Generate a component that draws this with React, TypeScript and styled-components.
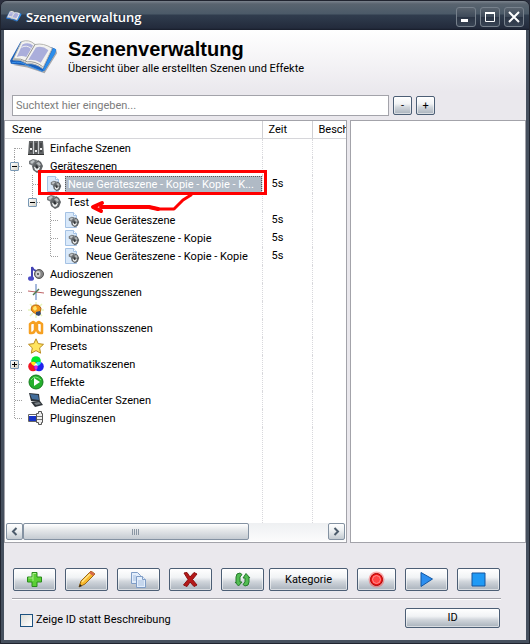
import React from "react";
import styled, { createGlobalStyle } from "styled-components";

const GlobalStyle = createGlobalStyle`
  * { box-sizing: border-box; }
  html, body, #root { height: 100%; margin: 0; }
  body { font: 11px/18px Roboto, "Liberation Sans", sans-serif; color: #000; background: #2c303f; }
  button, input { font: inherit; color: inherit; }
`;

const Window = styled.main`
  min-height: 100vh;
  display: flex;
  flex-direction: column;
  border: 1px solid #20242f;
  border-radius: 7px 7px 0 0;
  background: #46505e;
  padding: 0 3px 3px;
  overflow: hidden;
`;
const TitleBar = styled.header`
  height: 29px;
  margin: 0 -3px;
  padding: 2px 5px 0;
  display: flex;
  align-items: center;
  gap: 4px;
  color: #fff;
  font: 600 13px "Open Sans", sans-serif;
  background: linear-gradient(#7b838d 0, #59646f 3px, #4b5a68 13px, #303d4e 14px, #232b3c 27px, #171c2a 29px);
`;
const TitleText = styled.span` flex: 1; `;
const CaptionButton = styled.button`
  width: 20px;
  height: 20px;
  padding: 0;
  display: grid;
  place-items: center;
  border: 1px solid #77818c;
  border-radius: 3px;
  background: linear-gradient(#59636e, #3e4a59 48%, #2b3545 52%, #394454);
`;
const Body = styled.div`
  flex: 1;
  display: flex;
  flex-direction: column;
  background: linear-gradient(#fff, #eae8ed 62px);
`;
const Heading = styled.div`
  display: flex;
  align-items: flex-start;
  gap: 10px;
  padding: 8px 6px 0;
  height: 65px;
`;
const H1 = styled.h1` margin: 0; font: bold 20px/22px "Liberation Sans", Arial, sans-serif; `;
const Subtitle = styled.p` margin: 0; line-height: 18px; `;
const SearchRow = styled.div` display: flex; align-items: center; gap: 4px; padding: 0 91px 0 8px; height: 21px; `;
const Search = styled.input`
  flex: 1;
  min-width: 0;
  height: 21px;
  padding: 0 3px;
  border: 1px solid #a3a3aa;
  background: #fff;
  &::placeholder { color: #7d7d7d; opacity: 1; }
`;
const PushButton = styled.button<{ $w: number; $h: number }>`
  width: ${(p) => p.$w}px;
  height: ${(p) => p.$h}px;
  flex: none;
  padding: 0;
  display: grid;
  place-items: center;
  border: 1px solid #4c5e75;
  border-radius: 2px;
  background: linear-gradient(#fff, #f1f3f5 40%, #d0d5db 60%, #a9b2bc);
  box-shadow: inset 0 0 0 1px #ffffff88;
`;
const Panels = styled.div`
  flex: 1;
  margin-top: 4px;
  display: grid;
  grid-template-columns: 343fr 176fr;
  gap: 3px;
`;
const Panel = styled.section`
  position: relative;
  min-width: 0;
  display: flex;
  flex-direction: column;
  border: 1px solid #a3a3aa;
  background: #fff;
  overflow: hidden;
`;
const Tree = styled.table`
  width: 100%;
  table-layout: fixed;
  border-collapse: collapse;
  th { height: 17px; padding: 0 0 0 6px; text-align: left; font-weight: normal; line-height: 17px; white-space: nowrap; overflow: hidden; border-bottom: 1px solid #d6d6da; }
  th:first-child { padding-left: 7px; }
  th + th { border-left: 1px solid #d0d0d4; }
  td { height: 18px; padding: 0; }
  td + td { padding-left: 9px; border-left: 1px dotted #d8d8dc; }
`;
const Filler = styled.div`
  flex: 1;
  display: grid;
  grid-template-columns: 257px 50px 1fr;
  div + div { border-left: 1px dotted #d8d8dc; }
`;
const Row = styled.div` display: flex; align-items: center; height: 18px; padding-left: 0; `;
const Guide = styled.span<{ $v: "none" | "full" | "top" | "bottom"; $h: boolean }>`
  flex: none;
  width: 18px;
  height: 18px;
  display: grid;
  place-items: center;
  background-repeat: no-repeat;
  background-image:
    ${(p) => (p.$v === "none" ? "none" : "repeating-linear-gradient(#a0a0a0 0 1px, transparent 1px 2px)")},
    ${(p) => (p.$h ? "repeating-linear-gradient(90deg, #a0a0a0 0 1px, transparent 1px 2px)" : "none")};
  background-size: 1px ${(p) => (p.$v === "full" ? 18 : 9)}px, 9px 1px;
  background-position: 9px ${(p) => (p.$v === "bottom" ? 9 : 0)}px, 10px 9px;
`;
const Expander = styled.button`
  width: 9px;
  height: 9px;
  margin: 1px 0 0 1px;
  padding: 0;
  display: grid;
  border: 1px solid #7898b5;
  border-radius: 1px;
  background: linear-gradient(135deg, #fff, #d4d0c4);
`;
const IconSlot = styled.span` flex: none; width: 16px; height: 16px; margin: 0 3px 0 5px; display: block; svg { display: block; } `;
const Label = styled.span<{ $selected?: boolean }>`
  min-width: 0;
  flex: ${(p) => (p.$selected ? "1" : "none")};
  height: 17px;
  line-height: 17px;
  padding: 0 0 0 3px;
  white-space: nowrap;
  color: ${(p) => (p.$selected ? "#fff" : "inherit")};
  background: ${(p) => (p.$selected ? "#b0bac5" : "none")};
  outline: ${(p) => (p.$selected ? "1px dotted #5a5a5a" : "none")};
  outline-offset: -1px;
`;
const ScrollBar = styled.div` height: 18px; margin: 0 1px 1px; display: flex; background: linear-gradient(#eef0f2, #fbfbfc); `;
const ScrollButton = styled.button`
  width: 17px;
  height: 17px;
  padding: 0;
  display: grid;
  place-items: center;
  border: 1px solid #8492a2;
  border-radius: 2px;
  background: linear-gradient(#fff, #eceff1 45%, #c3cad1);
`;
const Thumb = styled.div`
  width: 226px;
  height: 17px;
  display: grid;
  place-items: center;
  border: 1px solid #8492a2;
  border-radius: 2px;
  background: linear-gradient(#fff, #e5e8ea 40%, #c5cbd2);
`;
const Space = styled.div` flex: 1; `;
const Toolbar = styled.div`
  display: flex;
  margin: 25px 25px 0 8px;
  padding: 0 1px 7px;
  border-bottom: 1px solid #a3a3aa;
  box-shadow: 0 1px #fff;
`;
const Group = styled.div` display: flex; gap: 9px; & + & { margin-left: 5px; } `;
const Footer = styled.footer` display: flex; justify-content: space-between; height: 41px; padding: 9px 26px 0 16px; `;
const CheckLabel = styled.label` display: flex; align-items: center; gap: 3px; height: 24px; font-size: 11px; `;
const Check = styled.input`
  appearance: none;
  width: 13px;
  height: 13px;
  margin: 0;
  border: 1px solid #1c5180;
  background: linear-gradient(135deg, #dcdcd7, #fff);
  &:checked { background: #1c5180; }
`;
const Markup = styled.svg` position: absolute; left: 0; top: 0; pointer-events: none; `;

const Book = ({ w, h }: { w: number; h: number }) => (
  <svg width={w} height={h} viewBox="0 0 50 38">
    <path d="M2 27 18 30 36 36 49 15 48 11 30 25Z" fill="#454b55" opacity=".45" />
    <path d="M0 23 11 3 14 3 44 9 48 11 47 15 36 33 33 34 20 28 1 26Z" fill="#1b62bd" />
    <path d="M45 10 48 11 47 15 36 33 34 33Z" fill="#2b8deb" />
    <path d="M2 25Q12 23 18 28L34 34" fill="none" stroke="#3c94ec" />
    <path d="M3 22 12 3Q20 0 26 6Q35 4 44 10L34 31Q26 25 18 26Q11 21 3 22Z" fill="#f2f2f0" stroke="#b5b5b0" />
    <path d="M4 21Q11 20 18 24Q26 23 34 29" fill="none" stroke="#92928c" />
    <path d="M26 6 16 23" stroke="#8e8e88" />
    <path d="M13 6Q19 3 24 7L17 19Q12 17 7 19Z" fill="#aaaedb" />
    <path d="M12 9Q17 6 22 10" stroke="#f2f2f0" fill="none" />
    <path d="M27 9Q34 7 40 12L32 25Q26 21 19 22Z" fill="#aaaedb" />
  </svg>
);

const Gripper = () => (
  <g>
    <path d="M1 3 5 1 9 2 8 6 5 8 1 6Z" fill="#75797c" />
    <path d="M2 4 5 2 7 3 4 6Z" fill="#bfc3c6" />
    <path d="M10 2 13 4 15 8 13 13 9 15 5 12 4 8 7 5Z" fill="#606467" />
    <path d="M8 5 11 4 13 7 11 8Z" fill="#b4b8ba" />
    <path d="M6 9 9 8 12 9 11 12 9 13 7 12Z" fill="#eceeee" />
    <path d="M8 7 11 9 9 11 7 9Z" fill="#303336" />
  </g>
);

const glyphs: Record<string, React.ReactNode> = {
  mixer: (
    <g>
      <path d="M1 1h14l1 14H0z" fill="#606365" />
      <path d="M5.500 1v14M10.500 1v14" stroke="#c5c8ca" />
      <path d="M3 3v9M8 3v9M13 3v9" stroke="#2c2e30" />
      <path d="M2 9h2M7 11h2M12 9h2" stroke="#eee" strokeWidth="2" />
      <path d="M0 14.500h16" stroke="#333" />
    </g>
  ),
  device: <Gripper />,
  file: (
    <g>
      <path d="M1.500.5h8l3 3v12h-11z" fill="#d9e9fa" stroke="#a5c2e4" />
      <path d="M9.500.5v3h3" fill="#fff" stroke="#a5c2e4" />
      <g transform="translate(4 4) scale(.75)"><Gripper /></g>
    </g>
  ),
  audio: (
    <g>
      <path d="M4 12V1Q5 4 8 5" stroke="#4343b4" strokeWidth="2" fill="none" />
      <ellipse cx="3" cy="12.500" rx="3" ry="2.300" fill="#4b4bc3" />
      <circle cx="11" cy="8" r="4.500" fill="#858585" stroke="#555" />
      <ellipse cx="10" cy="8" rx="2.500" ry="3" fill="#d2d2d2" />
      <circle cx="10" cy="8" r="1" fill="#444" />
    </g>
  ),
  axes: (
    <g fill="none">
      <path d="M8 0v16" stroke="#a5b9dc" strokeWidth="2" />
      <path d="M0 7 16 9" stroke="#bd6265" />
      <path d="M5 11 11 5" stroke="#50784f" strokeWidth="1.500" />
    </g>
  ),
  bulb: (
    <g>
      <path d="M2 2 14 14M14 2 2 14M8 0v16M0 8h16" stroke="#e8f5bd" strokeWidth="1.500" />
      <path d="M7 3C3 3 2 8 5 10L8 12 12 11 13 6Q11 2 7 3" fill="#f59a17" stroke="#b96a16" />
      <path d="M5 7Q5 4 8 4L9 7 7 9Z" fill="#ffe66b" />
      <path d="m8 10 4-1 1 3-2 2-3-1z" fill="#35496a" />
    </g>
  ),
  combi: (
    <g fill="none" stroke="#f6a021" strokeWidth="2.500" strokeLinejoin="round">
      <path d="M2 4 5 2Q8 3 7 6V10Q6 13 4 13H2Z" />
      <path d="M14 4 11 2Q8 3 9 6V10Q10 13 12 13H14Z" />
      <path d="M7 8h2" />
    </g>
  ),
  star: <path d="m8 .8 2.200 4.800 5.300.7-3.900 3.600 1 5.300L8 12.600l-4.700 2.600 1-5.300L.5 6.300l5.300-.7z" fill="#ffe45e" stroke="#b98a22" />,
  rgb: (
    <g>
      <circle cx="8" cy="5" r="4.800" fill="#00e52f" />
      <circle cx="5" cy="10.500" r="4.800" fill="#f01523" />
      <circle cx="11" cy="10.500" r="4.800" fill="#2023ed" />
      <path d="M3 6.200Q6 5 8 7L7 10Q3 9 3 6.200" fill="#ffee20" />
      <path d="M13 6.200Q10 5 8 7L9 10Q13 9 13 6.200" fill="#20e8ee" />
      <path d="M6.500 9.500h3Q10 13 8 14Q6 13 6.500 9.500" fill="#e320e5" />
      <path d="M8 7 10 9.500H6Z" fill="#fff" />
    </g>
  ),
  play: (
    <g>
      <circle cx="8" cy="8" r="7" fill="#25af2c" stroke="#147b1c" />
      <path d="M3 6Q7 0 13 6" fill="none" stroke="#7fe27e" />
      <path d="m6 4 6 4-6 4z" fill="#fff" />
    </g>
  ),
  laptop: (
    <g>
      <path d="m1 1 10 1 1 8-9-1z" fill="#2c3238" />
      <path d="m2 2 8 1 1 5-7-1z" fill="#426d9b" />
      <path d="m3 10 9-1 3 4-8 2z" fill="#2e3338" />
      <path d="m6 11 5-1 2 2-5 1z" fill="#777e84" />
    </g>
  ),
  plugin: (
    <g>
      <path d="M.5 4.500h10v7H.5z" fill="#fff" stroke="#666" />
      <path d="M1 6h7v5H1z" fill="#1733c8" />
      <path d="M10.500 1.500h3v2h1v9h-1v2h-3v-2h-2v-9h2z" fill="#eee" stroke="#555" />
      <path d="M9 6.500h5M9 9.500h5" stroke="#777" />
    </g>
  ),
};

type Item = { label: string; icon: string; level: number; time?: string; toggle?: "+" | "-"; selected?: boolean; last?: boolean };
const items: Item[] = [
  { label: "Einfache Szenen", icon: "mixer", level: 0 },
  { label: "Geräteszenen", icon: "device", level: 0, toggle: "-" },
  { label: "Neue Geräteszene - Kopie - Kopie - K...", icon: "file", level: 1, time: "5s", selected: true },
  { label: "Test", icon: "device", level: 1, toggle: "-", last: true },
  { label: "Neue Geräteszene", icon: "file", level: 2, time: "5s" },
  { label: "Neue Geräteszene - Kopie", icon: "file", level: 2, time: "5s" },
  { label: "Neue Geräteszene - Kopie - Kopie", icon: "file", level: 2, time: "5s", last: true },
  { label: "Audioszenen", icon: "audio", level: 0 },
  { label: "Bewegungsszenen", icon: "axes", level: 0 },
  { label: "Befehle", icon: "bulb", level: 0 },
  { label: "Kombinationsszenen", icon: "combi", level: 0 },
  { label: "Presets", icon: "star", level: 0 },
  { label: "Automatikszenen", icon: "rgb", level: 0, toggle: "+" },
  { label: "Effekte", icon: "play", level: 0 },
  { label: "MediaCenter Szenen", icon: "laptop", level: 0 },
  { label: "Pluginszenen", icon: "plugin", level: 0, last: true },
];

const TreeRow = ({ item, first }: { item: Item; first: boolean }) => (
  <tr aria-selected={item.selected}>
    <td>
      <Row>
        {Array.from({ length: item.level + 1 }, (_, i) => {
          const own = i === item.level;
          const v = own ? (first ? "bottom" : item.last ? "top" : "full") : i === 0 ? "full" : "none";
          return (
            <Guide key={i} $v={v} $h={own}>
              {own && item.toggle && (
                <Expander aria-label={`${item.label} ${item.toggle === "-" ? "zuklappen" : "aufklappen"}`}>
                  <svg width="7" height="7"><path d={item.toggle === "-" ? "M1 3.500h5" : "M1 3.500h5M3.500 1v5"} stroke="#000" /></svg>
                </Expander>
              )}
            </Guide>
          );
        })}
        <IconSlot><svg width="16" height="16" viewBox="0 0 16 16">{glyphs[item.icon]}</svg></IconSlot>
        <Label $selected={item.selected}>{item.label}</Label>
      </Row>
    </td>
    <td>{item.time}</td>
    <td />
  </tr>
);

const tools: Record<string, React.ReactNode> = {
  add: (
    <g>
      <path d="M6 1.500h5v4.500h4.500v5H11v4.500H6V11H1.500V6H6z" fill="#5bcf35" stroke="#2b8a1d" />
      <path d="M7 10V2.500h3M2.500 7H7" fill="none" stroke="#a9ee8b" />
    </g>
  ),
  edit: (
    <g>
      <path d="M1 16 3 10 13 0 17 3 7 13Z" fill="#f8b92d" stroke="#9a6717" />
      <path d="M4 11 13 2" stroke="#ffe58a" strokeWidth="1.500" />
      <path d="m13 0 4 3-2 2-4-3z" fill="#d66a4b" />
      <path d="m1 16 1-3 2 2z" fill="#222" />
    </g>
  ),
  copy: (
    <g fill="#e3eefb" stroke="#7f9dc6">
      <path d="M1.500 1.500h6l3 3v8h-9z" />
      <path d="M3 5h3M3 7h3M3 9h3" stroke="#a7bfdf" />
      <path d="M6.500 5.500h6l3 3v8h-9z" />
      <path d="M12.500 5.500v3h3" />
      <path d="M8 10h6M8 12h6M8 14h6" stroke="#a7bfdf" />
    </g>
  ),
  remove: <path d="M2 2 5 1.500 8 6 12 1.500 15 3 10.500 8.500 15 14 12 15.500 8 11 5 15.500 1.500 14 6 8.500Z" fill="#b51919" stroke="#8a1010" />,
  refresh: (
    <g fill="#52bd52" stroke="#267a2d">
      <path d="M2 12V6Q2 2 6 2L8 3.500 6 6V11H8L4.500 15 1 11Z" />
      <path d="M15 6v5Q15 15 11 15L9 13.500 11 11V7H9L12 2.500 16 7Z" />
    </g>
  ),
  record: (
    <g>
      <circle cx="8.500" cy="8.500" r="8" fill="#ff4d4d" opacity=".45" />
      <circle cx="8.500" cy="8.500" r="6" fill="#f51717" stroke="#a90505" />
      <circle cx="8.500" cy="8.500" r="4" fill="#ff4545" stroke="#ff9292" />
    </g>
  ),
  play: <path d="M3 1.500 14.500 8 3 15.500Z" fill="#2d8ff0" stroke="#1358a4" />,
  stop: <path d="M2 2h13v13H2z" fill="#1f9af5" stroke="#14559d" />,
};
const ToolButton = ({ icon, label, w = 43 }: { icon: string; label: string; w?: number }) => (
  <PushButton $w={w} $h={23} aria-label={label}><svg width="17" height="17" viewBox="0 0 17 17">{tools[icon]}</svg></PushButton>
);

export default function App() {
  return (
    <>
      <GlobalStyle />
      <Window>
        <TitleBar>
          <Book w={16} h={13} />
          <TitleText>Szenenverwaltung</TitleText>
          <CaptionButton aria-label="Minimieren"><svg width="12" height="12"><path d="M1 9.500h7" stroke="#fff" strokeWidth="3" /></svg></CaptionButton>
          <CaptionButton aria-label="Maximieren"><svg width="12" height="12"><path d="M1 2h10" stroke="#fff" strokeWidth="2" /><path d="M1.500 1.500h9v9h-9z" fill="none" stroke="#fff" /></svg></CaptionButton>
          <CaptionButton aria-label="Schließen"><svg width="12" height="12"><path d="m1 1 10 10M11 1 1 11" stroke="#fff" strokeWidth="2" /></svg></CaptionButton>
        </TitleBar>
        <Body>
          <Heading>
            <Book w={48} h={38} />
            <div>
              <H1>Szenenverwaltung</H1>
              <Subtitle>Übersicht über alle erstellten Szenen und Effekte</Subtitle>
            </div>
          </Heading>
          <SearchRow>
            <Search aria-label="Suchtext" placeholder="Suchtext hier eingeben..." />
            <PushButton $w={19} $h={19}>-</PushButton>
            <PushButton $w={19} $h={19}>+</PushButton>
          </SearchRow>
          <Panels>
            <Panel>
              <Tree>
                <colgroup><col style={{ width: 257 }} /><col style={{ width: 50 }} /><col /></colgroup>
                <thead><tr><th>Szene</th><th>Zeit</th><th>Beschl</th></tr></thead>
                <tbody>{items.map((item, i) => <TreeRow key={i} item={item} first={i === 0} />)}</tbody>
              </Tree>
              <Filler><div /><div /><div /></Filler>
              <ScrollBar>
                <ScrollButton aria-label="Nach links"><svg width="9" height="9"><path d="M6.500 1 3 4.500 6.500 8" fill="none" stroke="#4d5c6c" strokeWidth="2" /></svg></ScrollButton>
                <Thumb><svg width="8" height="6"><path d="M.5 0v6M2.500 0v6M4.500 0v6M6.500 0v6" stroke="#8a96a3" /></svg></Thumb>
                <Space />
                <ScrollButton aria-label="Nach rechts"><svg width="9" height="9"><path d="M2.500 1 6 4.500 2.500 8" fill="none" stroke="#4d5c6c" strokeWidth="2" /></svg></ScrollButton>
              </ScrollBar>
              <Markup width="270" height="100">
                <path d="M34.500 50.500h226v22h-226z" fill="none" stroke="#f00" strokeWidth="3" />
                <g fill="none" stroke="#f00" strokeLinecap="round" strokeLinejoin="round">
                  <path d="M186 74 178 79 169 88H153L144 86" strokeWidth="3" />
                  <path d="M153 88 144 86H96" strokeWidth="4" />
                  <path d="M97 82 88 86 96 90" strokeWidth="4" />
                </g>
              </Markup>
            </Panel>
            <Panel aria-label="Vorschau" />
          </Panels>
          <Toolbar>
            <Group>
              <ToolButton icon="add" label="Hinzufügen" />
              <ToolButton icon="edit" label="Bearbeiten" />
              <ToolButton icon="copy" label="Kopieren" />
              <ToolButton icon="remove" label="Löschen" />
              <ToolButton icon="refresh" label="Aktualisieren" />
            </Group>
            <Group>
              <PushButton $w={79} $h={23}>Kategorie</PushButton>
              <ToolButton icon="record" label="Aufnehmen" w={39} />
              <ToolButton icon="play" label="Abspielen" />
              <ToolButton icon="stop" label="Stoppen" />
            </Group>
          </Toolbar>
          <Footer>
            <CheckLabel><Check type="checkbox" />Zeige ID statt Beschreibung</CheckLabel>
            <PushButton $w={95} $h={20}>ID</PushButton>
          </Footer>
        </Body>
      </Window>
    </>
  );
}
